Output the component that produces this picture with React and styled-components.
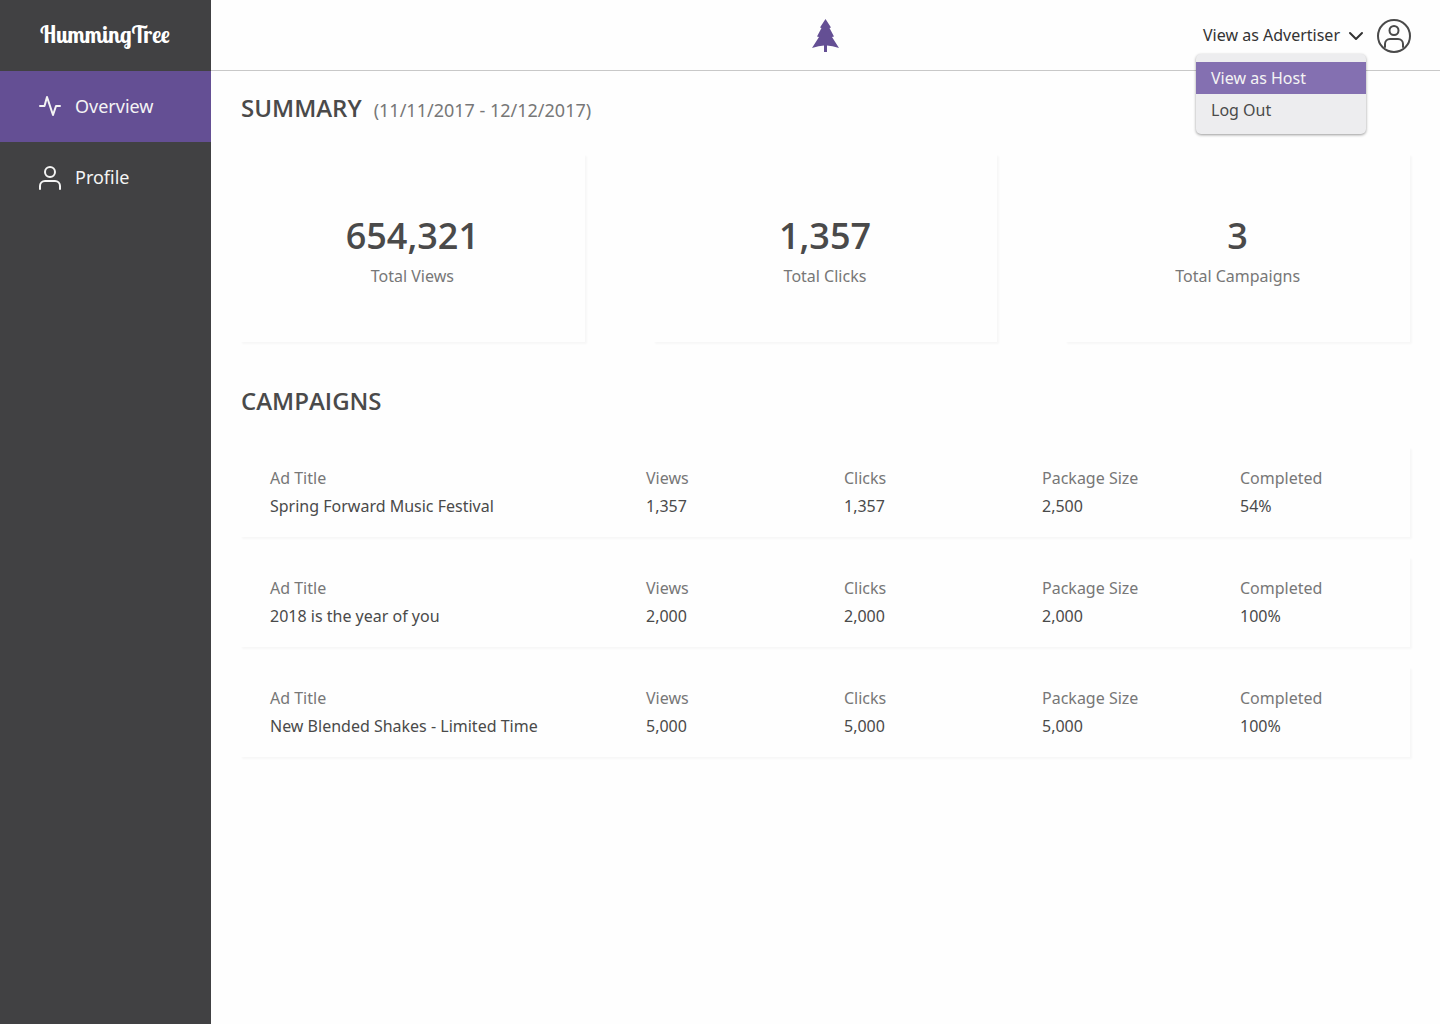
import React from "react";
import styled, { createGlobalStyle } from "styled-components";

const GlobalStyle = createGlobalStyle`
  *, *::before, *::after { box-sizing: border-box; }
  body {
    margin: 0;
    background: #fefefe;
    color: #4a4a4a;
    font-family: "Noto Sans", "Open Sans", sans-serif;
    font-size: 16px;
    line-height: 24px;
  }
  button { font: inherit; color: inherit; border: 0; background: none; padding: 0; cursor: pointer; }
  h1, h2, p, dl, dd, ul { margin: 0; padding: 0; }
`;

const Shell = styled.div`
  display: grid;
  grid-template-columns: 211px 1fr;
  min-height: 100vh;
`;

const Sidebar = styled.aside`
  background: #414143;
  color: #f4f4f4;
`;

const Brand = styled.a`
  display: flex;
  align-items: center;
  height: 71px;
  padding: 0 0 2px 40px;
  color: #fff;
  font-family: "Lobster Two", Lobster, "Liberation Serif", serif;
  font-size: 23px;
  font-weight: 700;
  text-decoration: none;
`;

const NavLink = styled.a`
  display: flex;
  align-items: center;
  gap: 12px;
  height: 71px;
  padding: 0 0 2px 37px;
  background: ${(p) => (p.$active ? "#644f94" : "transparent")};
  color: #f4f4f4;
  font-size: 18px;
  text-decoration: none;
`;

const Header = styled.header`
  display: grid;
  grid-template-columns: 1fr auto 1fr;
  align-items: center;
  height: 71px;
  padding: 2px 28px 0;
  border-bottom: 1px solid #c8c8c8;
`;

const Account = styled.div`
  grid-column: 3;
  justify-self: end;
  display: flex;
  align-items: center;
  gap: 12px;
`;

const Tree = styled.svg`
  grid-column: 2;
`;

const MenuAnchor = styled.div`
  position: relative;
`;

const MenuButton = styled.button`
  display: flex;
  align-items: center;
  gap: 8px;
  padding-bottom: 2px;
  color: #333;
`;

const AvatarButton = styled.button`
  display: flex;
`;

const Menu = styled.ul`
  position: absolute;
  top: 31px;
  right: -2px;
  width: 170px;
  padding: 8px 0;
  border-radius: 5px;
  background: #ededef;
  box-shadow: 0 1px 3px rgba(0, 0, 0, 0.4);
  list-style: none;
`;

const MenuItem = styled.button`
  display: block;
  width: 100%;
  height: 32px;
  padding: 0 15px;
  text-align: left;
  background: ${(p) => (p.$active ? "#8470b1" : "transparent")};
  color: ${(p) => (p.$active ? "#f4f4f4" : "#4a4a4a")};
`;

const Main = styled.main`
  padding: 19px 30px 40px 29px;
`;

const SectionHead = styled.div`
  display: flex;
  align-items: baseline;
  gap: 12px;
  height: 36px;
  padding-left: 1px;
`;

const Title = styled.h2`
  font-family: "Open Sans", sans-serif;
  font-size: 24px;
  font-weight: 600;
  line-height: 36px;
`;

const DateRange = styled.span`
  color: #777;
  font-size: 18px;
`;

const StatGrid = styled.div`
  display: grid;
  grid-template-columns: repeat(3, 1fr);
  gap: 68px;
  margin: 28px 0 41px;
`;

const Panel = styled.div`
  background: #fefefe;
  box-shadow: 2px 2px 2px rgba(0, 0, 0, 0.03);
`;

const Stat = styled(Panel)`
  display: flex;
  flex-direction: column;
  align-items: center;
  justify-content: center;
  gap: 4px;
  height: 188px;
  padding-top: 4px;
`;

const StatValue = styled.strong`
  font-family: "Open Sans", sans-serif;
  font-size: 36px;
  font-weight: 600;
  line-height: 48px;
`;

const Label = styled.span`
  color: #777;
`;

const CampaignList = styled.div`
  display: grid;
  gap: 20px;
  margin-top: 28px;
`;

const Campaign = styled(Panel).attrs({ as: "dl" })`
  display: grid;
  grid-template-columns: 376fr 198fr 198fr 198fr 140fr;
  padding: 19px 30px;
`;

const Term = styled.dt`
  color: #777;
  margin-bottom: 4px;
`;

const stats = [
  ["654,321", "Total Views"],
  ["1,357", "Total Clicks"],
  ["3", "Total Campaigns"],
];

const fields = ["Ad Title", "Views", "Clicks", "Package Size", "Completed"];

const campaigns = [
  ["Spring Forward Music Festival", "1,357", "1,357", "2,500", "54%"],
  ["2018 is the year of you", "2,000", "2,000", "2,000", "100%"],
  ["New Blended Shakes - Limited Time", "5,000", "5,000", "5,000", "100%"],
];

const line = { fill: "none", stroke: "currentColor", strokeWidth: 2, strokeLinecap: "round", strokeLinejoin: "round", "aria-hidden": true };

export default function App() {
  return (
    <>
      <GlobalStyle />
      <Shell>
        <Sidebar>
          <Brand href="#">HummingTree</Brand>
          <nav>
            <NavLink href="#overview" $active>
              <svg width="26" height="26" viewBox="0 0 26 26" {...line}>
                <path d="M3 13h4.500l2.500-9 6 18 3-9h4" />
              </svg>
              Overview
            </NavLink>
            <NavLink href="#profile">
              <svg width="26" height="28" viewBox="0 0 26 28" {...line}>
                <circle cx="13" cy="9" r="5" />
                <path d="M3 26v-3a5 5 0 0 1 5-5h10a5 5 0 0 1 5 5v3" />
              </svg>
              Profile
            </NavLink>
          </nav>
        </Sidebar>
        <div>
          <Header>
            <Tree width="27" height="34" viewBox="0 0 27 34" fill="#644f94" aria-hidden="true">
              <path d="M13.500 0L19 8.500L17.500 9L22 17.500L20 18L27 29Q20 26.500 15 26.500V33H12V26.500Q7 26.500 0 29L7 18L5 17.500L9.500 9L8 8.500Z" />
            </Tree>
            <Account>
              <MenuAnchor>
                <MenuButton aria-haspopup="menu" aria-expanded="true">
                  View as Advertiser
                  <svg width="16" height="16" viewBox="0 0 16 16" {...line}>
                    <path d="M2 6l6 6 6-6" />
                  </svg>
                </MenuButton>
                <Menu>
                  <li><MenuItem $active>View as Host</MenuItem></li>
                  <li><MenuItem>Log Out</MenuItem></li>
                </Menu>
              </MenuAnchor>
              <AvatarButton aria-label="Account">
                <svg width="36" height="36" viewBox="0 0 36 36" {...line}>
                  <circle cx="18" cy="18" r="16" />
                  <circle cx="18" cy="12.500" r="4.500" />
                  <path d="M9 29v-3a5 5 0 0 1 5-5h8a5 5 0 0 1 5 5v3" />
                </svg>
              </AvatarButton>
            </Account>
          </Header>
          <Main>
            <SectionHead>
              <Title>SUMMARY</Title>
              <DateRange>(11/11/2017 - 12/12/2017)</DateRange>
            </SectionHead>
            <StatGrid>
              {stats.map(([value, label]) => (
                <Stat key={label}>
                  <StatValue>{value}</StatValue>
                  <Label>{label}</Label>
                </Stat>
              ))}
            </StatGrid>
            <SectionHead>
              <Title>CAMPAIGNS</Title>
            </SectionHead>
            <CampaignList>
              {campaigns.map((row) => (
                <Campaign key={row[0]}>
                  {fields.map((field, i) => (
                    <div key={field}>
                      <Term>{field}</Term>
                      <dd>{row[i]}</dd>
                    </div>
                  ))}
                </Campaign>
              ))}
            </CampaignList>
          </Main>
        </div>
      </Shell>
    </>
  );
}
